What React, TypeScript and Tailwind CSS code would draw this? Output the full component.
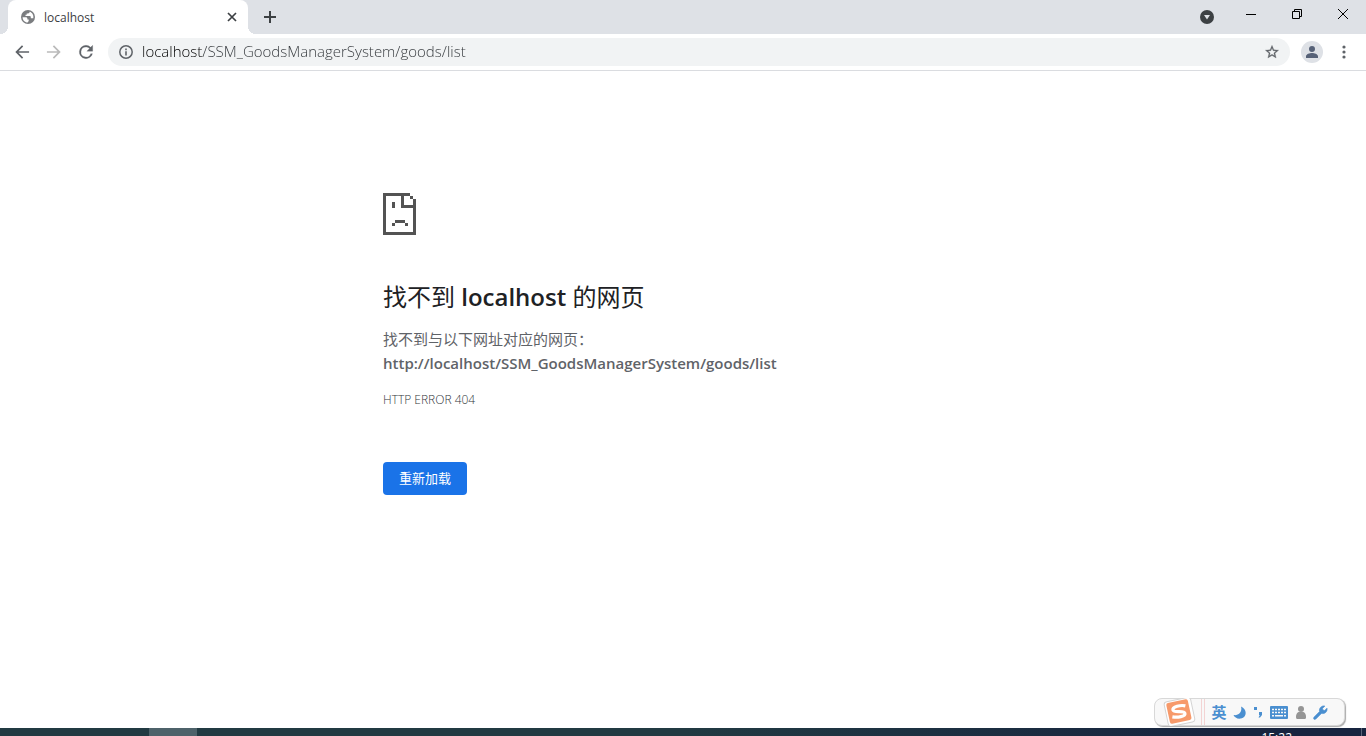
import React from "react";

const PAGE_URL = "localhost/SSM_GoodsManagerSystem/goods/list";

function GlobeIcon() {
  return (
    <svg width="14" height="14" viewBox="0 0 14 14" aria-hidden="true">
      <circle cx="7" cy="7" r="7" fill="#7b7d80" />
      <path d="M1.600 7.200h3.200c1 0 1.600.6 1.600 1.500v.8h1.300v1.400l-1.100 1.600C3.800 12.400 1.600 10.100 1.600 7.200z" fill="#fff" />
      <path d="M8.600 1.800c0 1.200-.6 1.700-1.700 1.700H5.700v1.300H4.500v1.100h4c.9 0 1.300.5 1.300 1.300v1h2.500c.6-2.900-1-5.700-3.700-6.400z" fill="#fff" />
    </svg>
  );
}

function TabStrip() {
  return (
    <header className="flex h-[34px] bg-[#dee1e6] pl-2">
      <div className="relative flex w-60 items-center rounded-t-lg bg-white pl-[13px] pr-2.5">
        <span className="absolute -left-2 bottom-0 size-2 bg-[radial-gradient(circle_at_0_0,#dee1e6_8px,#fff_8px)]" />
        <span className="absolute -right-2 bottom-0 size-2 bg-[radial-gradient(circle_at_100%_0,#dee1e6_8px,#fff_8px)]" />
        <GlobeIcon />
        <span className="ml-[9px] flex-1 pt-px text-xs text-[#3c4043]">localhost</span>
        <button aria-label="关闭标签页" className="flex size-3 items-center justify-center">
          <svg width="10" height="10" viewBox="0 0 10 10" stroke="#3c4043" strokeWidth="1.700">
            <path d="M1 1l8 8M9 1L1 9" />
          </svg>
        </button>
      </div>
      <button aria-label="打开新的标签页" className="ml-2 flex w-7 items-center justify-center">
        <svg width="12" height="12" viewBox="0 0 12 12" stroke="#3c4043" strokeWidth="2">
          <path d="M6 0v12M0 6h12" />
        </svg>
      </button>
      <div className="ml-auto flex">
        <button aria-label="搜索标签页" className="flex w-[42px] items-center justify-center">
          <svg width="14" height="14" viewBox="0 0 14 14">
            <circle cx="7" cy="7" r="7" fill="#3c4043" />
            <path d="M4 5h6L7 9.500z" fill="#dee1e6" />
          </svg>
        </button>
        <button aria-label="最小化" className="flex h-7 w-[46px] items-center justify-center">
          <svg width="10" height="10" viewBox="0 0 10 10">
            <path d="M0 5h10v1H0z" fill="#000" />
          </svg>
        </button>
        <button aria-label="还原" className="flex h-7 w-[46px] items-center justify-center">
          <svg width="10" height="10" viewBox="0 0 10 10" fill="none" stroke="#000">
            <path d="M.5 2.500h7v7h-7zM2.500 2.500v-2h7v7h-2" />
          </svg>
        </button>
        <button aria-label="关闭" className="flex h-7 w-[46px] items-center justify-center">
          <svg width="10" height="10" viewBox="0 0 10 10" stroke="#000">
            <path d="M0 0l10 10M10 0L0 10" />
          </svg>
        </button>
      </div>
    </header>
  );
}

function Toolbar() {
  return (
    <nav className="flex h-[37px] items-center border-b border-[#dadce0] px-1.5">
      <button aria-label="后退" className="flex size-8 items-center justify-center">
        <svg width="20" height="20" viewBox="0 0 24 24" fill="#5f6368">
          <path d="M20.500 11H7.830l5.590-5.590L12 4l-8 8 8 8 1.410-1.410L7.830 13H20.500z" />
        </svg>
      </button>
      <button aria-label="前进" className="flex size-8 items-center justify-center">
        <svg width="20" height="20" viewBox="0 0 24 24" fill="#bababa">
          <path d="M3.500 13h12.670l-5.590 5.590L12 20l8-8-8-8-1.410 1.410L16.170 11H3.500z" />
        </svg>
      </button>
      <button aria-label="重新加载此页" className="flex size-8 items-center justify-center">
        <svg width="20" height="20" viewBox="0 0 24 24" fill="#5f6368" stroke="#5f6368" strokeWidth=".3">
          <path d="M17.650 6.350A7.960 7.960 0 0 0 12 4a8 8 0 1 0 7.730 10h-2.080A6 6 0 1 1 12 6c1.660 0 3.140.69 4.220 1.780L13 11h7V4z" />
        </svg>
      </button>
      <div className="ml-1.5 flex h-7 flex-1 items-center rounded-full bg-[#f1f3f4] px-2.5">
        <button aria-label="查看网站信息">
          <svg width="16" height="16" viewBox="0 0 16 16" fill="none">
            <circle cx="8" cy="8" r="6.200" stroke="#5f6368" strokeWidth="1.500" />
            <path d="M7.200 7.200h1.600V11.500H7.200zM7.200 4.600h1.600v1.600H7.200z" fill="#5f6368" />
          </svg>
        </button>
        <input
          type="text"
          aria-label="地址和搜索栏"
          defaultValue={PAGE_URL}
          spellCheck={false}
          className="ml-2 h-6 min-w-0 flex-1 bg-linear-to-r from-black from-[61px] to-[#33373b] to-[61px] bg-clip-text pb-0.5 text-[15px] font-light text-transparent outline-none"
        />
        <button aria-label="为此标签页添加书签">
          <svg width="16" height="16" viewBox="0 0 24 24" fill="#5f6368" stroke="#5f6368" strokeWidth=".4">
            <path d="M22 9.240l-7.190-.62L12 2 9.190 8.630 2 9.240l5.460 4.730L5.820 21 12 17.270 18.180 21l-1.630-7.030zM12 15.400l-3.760 2.270 1-4.280-3.320-2.880 4.380-.38L12 6.100l1.710 4.040 4.380.38-3.320 2.880 1 4.280z" />
          </svg>
        </button>
      </div>
      <button aria-label="用户" className="ml-[11px] flex size-[22px] items-center justify-center rounded-full bg-[#dee1e6]">
        <svg width="16" height="16" viewBox="0 0 24 24" fill="#566177">
          <path d="M12 12a4.500 4.500 0 1 0 0-9 4.500 4.500 0 0 0 0 9zm0 1.500c-3.500 0-9 1.700-9 5V21h18v-2.500c0-3.300-5.500-5-9-5z" />
        </svg>
      </button>
      <button aria-label="自定义及控制" className="ml-[5px] flex size-8 items-center justify-center">
        <svg width="4" height="14" viewBox="0 0 4 14" fill="#5f6368">
          <circle cx="2" cy="2" r="1.600" />
          <circle cx="2" cy="7" r="1.600" />
          <circle cx="2" cy="12" r="1.600" />
        </svg>
      </button>
    </nav>
  );
}

function SadPageIcon() {
  return (
    <svg width="33" height="42" viewBox="0 0 33 42" fill="#535353" shapeRendering="crispEdges" aria-hidden="true">
      <path d="M0 0h27v3H21v9h12v30H0zM3 3v36h27V15H18V3z" fillRule="evenodd" />
      <path d="M27 3h3v3h-3zM30 6h3v6h-3zM9 9h3v6H9zM12 27h10v3H12zM9 30h3v3H9zM22 30h3v3h-3z" />
    </svg>
  );
}

function ErrorPage() {
  return (
    <main className="mx-auto w-full max-w-[600px] flex-1 pt-[122px] text-[#5f6368]">
      <SadPageIcon />
      <h1 className="mt-12 text-2xl leading-7 text-[#202124]">
        找不到 <span className="font-semibold">localhost</span> 的网页
      </h1>
      <p className="mt-4 text-[15px] leading-6">
        找不到与以下网址对应的网页：
        <strong className="block font-semibold">http://{PAGE_URL}</strong>
      </p>
      <p className="mt-[13px] text-xs leading-6 font-light text-[#33373b]">HTTP ERROR 404</p>
      <button className="mt-[50px] h-[33px] rounded bg-[#1a73e8] px-4 text-[13px] text-white">重新加载</button>
    </main>
  );
}

function ImeBar() {
  return (
    <aside className="absolute right-[21px] bottom-2.5 flex h-7 w-[191px] items-center rounded-lg border border-[#d8d8d8] bg-[#f8f8f8] text-[#4a8fd0] shadow-[1px_1px_1px_#aaa]">
      <svg width="46" height="28" viewBox="1 0 46 28" aria-hidden="true">
        <g transform="rotate(-12 25 14)">
          <rect x="12" y="1.500" width="27" height="25" rx="3" fill="#fff" stroke="#d4d4d4" />
          <rect x="14" y="3" width="22" height="21" rx="2" fill="#f79a6b" />
          <path d="M32.500 8.300c-4.500-2-13-2-13 1.400 0 3.700 11 2.300 11 5.900 0 3.200-8 2.800-13 .8" fill="none" stroke="#fff" strokeWidth="3.200" transform="translate(0 1)" />
        </g>
      </svg>
      <span className="h-full w-1 border-x border-[#f3d3d3]" />
      <div className="flex flex-1 items-center pl-1.5">
        <button aria-label="切换中英文" className="w-4 text-[15px] leading-5 font-bold">英</button>
        <button aria-label="全角半角" className="ml-1.5">
          <svg width="13" height="13" viewBox="0 0 13 13" fill="currentColor">
            <path d="M8 .5c6 2.500 6.500 10.500 0 12C4.500 13.200 1.500 11.500.5 9 6 10 9.500 5.500 8 .5z" />
          </svg>
        </button>
        <button aria-label="中英文标点" className="ml-2">
          <svg width="8" height="12" viewBox="0 0 8 12" fill="currentColor">
            <path d="M0 1h3v3H0zM5 6h3v3L6 11.500H4.500L5.800 9H5z" />
          </svg>
        </button>
        <button aria-label="软键盘" className="ml-2">
          <svg width="18" height="13" viewBox="0 0 18 13">
            <rect width="18" height="13" rx="1" fill="currentColor" />
            <path d="M2 3.500h14M2 6.500h14" stroke="#f8f8f8" strokeWidth="1.500" strokeDasharray="2 1" />
            <path d="M2 9.800h2M5 9.800h8M14 9.800h2" stroke="#f8f8f8" strokeWidth="1.500" />
          </svg>
        </button>
        <button aria-label="账户" className="ml-2">
          <svg width="10" height="13" viewBox="0 0 10 13" fill="#959595">
            <circle cx="5" cy="3" r="3" />
            <path d="M2.500 6h5C9.300 7 10 8.500 10 11c0 1.500-.5 2-1.500 2h-7C.5 13 0 12.500 0 11c0-2.500.7-4 2.500-5z" />
          </svg>
        </button>
        <button aria-label="工具箱" className="ml-[7px]">
          <svg width="15" height="15" viewBox="0 0 24 24" fill="currentColor" stroke="currentColor">
            <path d="M1.500 19.500l9-9C9.300 5 13.500.5 19 1.600L15.200 5.400l.7 2.700 2.700.7 3.800-3.800c1.100 5.500-3.400 9.700-8.900 8.500l-9 9c-2.700 1.500-4.500-.3-3-3z" />
          </svg>
        </button>
      </div>
    </aside>
  );
}

function Taskbar() {
  return (
    <footer className="flex h-2 justify-between overflow-hidden bg-linear-to-r from-[#213a42] from-50% to-[#17243f] to-90%">
      <span className="ml-[149px] w-12 bg-[#4d626a]" />
      <div className="flex">
        <time className="pt-1 text-xs leading-3 text-white">15:22</time>
        <span className="mr-1 ml-[69px] w-px bg-[#5a6478]" />
      </div>
    </footer>
  );
}

export default function App() {
  return (
    <div className="relative flex h-screen flex-col overflow-hidden bg-white font-['Open_Sans','Noto_Sans_CJK_SC',sans-serif]">
      <TabStrip />
      <Toolbar />
      <ErrorPage />
      <ImeBar />
      <Taskbar />
    </div>
  );
}
